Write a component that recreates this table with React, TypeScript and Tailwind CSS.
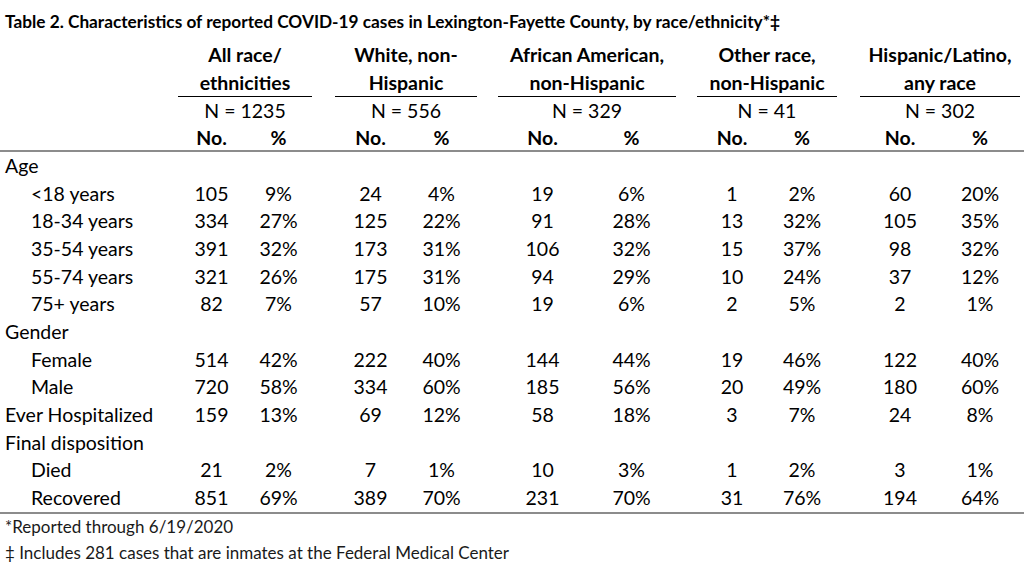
import React from 'react';

type Pair = [number, string];

interface Group {
  title: [string, string];
  n: number;
  cls: string;
}

interface DataRow {
  label: string;
  indent?: boolean;
  vals?: Pair[];
}

const groups: Group[] = [
  { title: ['All race/', 'ethnicities'], n: 1235, cls: 'w-[134px]' },
  { title: ['White, non-', 'Hispanic'], n: 556, cls: 'ml-[23px] w-[142px]' },
  { title: ['African American,', 'non-Hispanic'], n: 329, cls: 'ml-[21px] w-[178px]' },
  { title: ['Other race,', 'non-Hispanic'], n: 41, cls: 'ml-[21px] w-[140px]' },
  { title: ['Hispanic/Latino,', 'any race'], n: 302, cls: 'ml-[23px] w-[160px]' },
];

const rows: DataRow[] = [
  { label: 'Age' },
  { label: '<18 years', indent: true, vals: [[105, '9%'], [24, '4%'], [19, '6%'], [1, '2%'], [60, '20%']] },
  { label: '18-34 years', indent: true, vals: [[334, '27%'], [125, '22%'], [91, '28%'], [13, '32%'], [105, '35%']] },
  { label: '35-54 years', indent: true, vals: [[391, '32%'], [173, '31%'], [106, '32%'], [15, '37%'], [98, '32%']] },
  { label: '55-74 years', indent: true, vals: [[321, '26%'], [175, '31%'], [94, '29%'], [10, '24%'], [37, '12%']] },
  { label: '75+ years', indent: true, vals: [[82, '7%'], [57, '10%'], [19, '6%'], [2, '5%'], [2, '1%']] },
  { label: 'Gender' },
  { label: 'Female', indent: true, vals: [[514, '42%'], [222, '40%'], [144, '44%'], [19, '46%'], [122, '40%']] },
  { label: 'Male', indent: true, vals: [[720, '58%'], [334, '60%'], [185, '56%'], [20, '49%'], [180, '60%']] },
  { label: 'Ever Hospitalized', vals: [[159, '13%'], [69, '12%'], [58, '18%'], [3, '7%'], [24, '8%']] },
  { label: 'Final disposition' },
  { label: 'Died', indent: true, vals: [[21, '2%'], [7, '1%'], [10, '3%'], [1, '2%'], [3, '1%']] },
  { label: 'Recovered', indent: true, vals: [[851, '69%'], [389, '70%'], [231, '70%'], [31, '76%'], [194, '64%']] },
];

// one header line: empty label cell + a cell per group
const HeaderLine: React.FC<{ render: (g: Group) => React.ReactNode; className?: string; cellClass?: string }> = ({
  render,
  className = '',
  cellClass = '',
}) => (
  <div className={`flex ${className}`}>
    <div className="w-[178px] shrink-0" />
    {groups.map((g, i) => (
      <div key={i} className={`${g.cls} shrink-0 ${cellClass}`}>
        {render(g)}
      </div>
    ))}
  </div>
);

const App: React.FC = () => {
  return (
    <div className="w-[1024px] h-[566px] bg-white text-black font-[Lato,sans-serif] overflow-hidden">
      {/* Title */}
      <div className="h-[41px] pt-[3px] pl-[5px] leading-[38px] text-[17.25px] font-bold whitespace-nowrap">
        Table 2. Characteristics of reported COVID-19 cases in Lexington-Fayette County, by race/ethnicity*‡
      </div>

      {/* Column headers */}
      <div className="text-[19.5px]">
        <HeaderLine
          className="h-[28px] leading-[28px] font-bold"
          cellClass="text-center whitespace-nowrap"
          render={(g) => g.title[0]}
        />
        <HeaderLine
          className="h-[28px] font-bold"
          cellClass="h-[28px] leading-[27px] text-center whitespace-nowrap border-b border-black"
          render={(g) => g.title[1]}
        />
        <HeaderLine
          className="h-[28px] leading-[28px]"
          cellClass="text-center"
          render={(g) => `N = ${g.n}`}
        />
        <HeaderLine
          className="h-[25px] leading-[25px] font-bold"
          cellClass="flex"
          render={() => (
            <>
              <div className="w-1/2 text-center">No.</div>
              <div className="w-1/2 text-center">%</div>
            </>
          )}
        />
      </div>

      {/* Body */}
      <div className="border-t-2 border-b-2 border-[#8c8c8c] text-[19.5px]">
        {rows.map((r, ri) => (
          <div key={ri} className="flex h-[27.67px] leading-[27.67px]">
            <div className={`w-[178px] shrink-0 whitespace-nowrap ${r.indent ? 'pl-[31px]' : 'pl-[5px]'}`}>
              {r.label}
            </div>
            {r.vals &&
              groups.map((g, gi) => (
                <div key={gi} className={`${g.cls} shrink-0 flex`}>
                  <div className="w-1/2 text-center">{r.vals![gi][0]}</div>
                  <div className="w-1/2 text-center">{r.vals![gi][1]}</div>
                </div>
              ))}
          </div>
        ))}
      </div>

      {/* Footnotes */}
      <div className="pl-[5px] text-[17px] text-[#1a1a1a]">
        <div className="h-[26px] leading-[26px]">*Reported through 6/19/2020</div>
        <div className="h-[26px] leading-[26px]">‡ Includes 281 cases that are inmates at the Federal Medical Center</div>
      </div>
    </div>
  );
};

export default App;
